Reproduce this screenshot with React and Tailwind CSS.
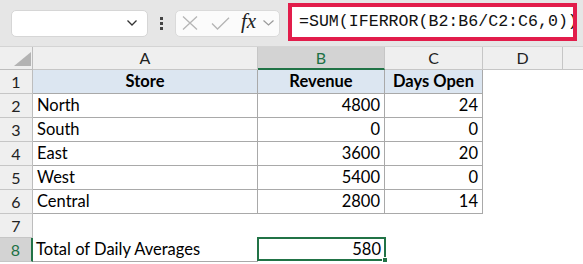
import React from "react";

const font = { fontFamily: "Lato, 'Noto Sans', sans-serif" };

const rows = [
  ["North", "4800", "24"],
  ["South", "0", "0"],
  ["East", "3600", "20"],
  ["West", "5400", "0"],
  ["Central", "2800", "14"],
];

function RowHead({ n, selected }) {
  return (
    <div
      className={
        "h-[24px] flex items-center justify-center border-b border-[#c6c6c6] text-[16px] " +
        (selected
          ? "bg-[#d3d3d3] text-[#1e7145] border-r-2 border-r-[#217346]"
          : "bg-[#efefef] text-[#222] border-r border-r-[#bdbdbd]")
      }
    >
      {n}
    </div>
  );
}

export default function App() {
  return (
    <div className="w-[583px] h-[264px] overflow-hidden bg-white text-black" style={font}>
      {/* formula bar */}
      <div className="h-[47px] bg-[#e6e6e6] flex items-center pl-[11px] border-b border-[#d4d4d4]">
        <div className="w-[137px] h-[27px] bg-white rounded-[5px] border border-[#d6d6d6] flex items-center justify-end pr-[10px]">
          <svg width="10" height="6" viewBox="0 0 10 6">
            <path d="M0.5 0.5 L5 5 L9.5 0.5" fill="none" stroke="#333" strokeWidth="1.3" />
          </svg>
        </div>
        <div className="w-[27px] flex flex-col items-center gap-[2px]">
          <div className="w-[3px] h-[3px] bg-[#444]" />
          <div className="w-[3px] h-[3px] bg-[#444]" />
          <div className="w-[3px] h-[3px] bg-[#444]" />
        </div>
        <div className="w-[105px] h-[27px] bg-[#fbfbfb] rounded-[5px] border border-[#dadada] flex items-center pl-[6px]">
          <svg width="16" height="14" viewBox="0 0 16 14" className="mr-[13px]">
            <path d="M1 0.5 L15 13.5 M15 0.5 L1 13.5" stroke="#b5b5b5" strokeWidth="1.3" fill="none" />
          </svg>
          <svg width="19" height="13" viewBox="0 0 19 13" className="mr-[11px]">
            <path d="M1 6.5 L6.5 12 L18 0.8" stroke="#b5b5b5" strokeWidth="1.3" fill="none" />
          </svg>
          <span
            className="italic text-[21px] leading-none text-[#222] mr-[7px] -mt-[4px]"
            style={{ fontFamily: "'Liberation Serif', serif" }}
          >
            fx
          </span>
          <svg width="11" height="6" viewBox="0 0 11 6">
            <path d="M0.5 0.5 L5.5 5 L10.5 0.5" fill="none" stroke="#9a9a9a" strokeWidth="1.2" />
          </svg>
        </div>
        <div className="ml-[8px] self-start mt-[3px] w-[289px] h-[38px] border-[4px] border-[#e21d4b] bg-white flex items-center pl-[7px] overflow-hidden whitespace-nowrap">
          <span
            className="text-[16.6px] text-[#111]"
            style={{ fontFamily: "'Liberation Mono', monospace" }}
          >
            =SUM(IFERROR(B2:B6/C2:C6,0))
          </span>
        </div>
      </div>

      {/* sheet */}
      <div className="grid grid-cols-[33px_225px_127px_98px_80px_1fr] text-[16.5px]">
        {/* column headers */}
        <div className="h-[23px] bg-[#efefef] border-r border-b border-[#bdbdbd] flex items-end justify-end pr-[1px] pb-[3px]">
          <svg width="17" height="14" viewBox="0 0 17 14">
            <polygon points="17,0 17,14 0,14" fill="#b3b3b3" />
          </svg>
        </div>
        <div className="h-[23px] bg-[#efefef] border-r border-b border-[#c6c6c6] flex items-center justify-center text-[#222] text-[16px]">A</div>
        <div className="h-[23px] bg-[#d3d3d3] border-r border-[#c6c6c6] border-b-2 border-b-[#217346] flex items-center justify-center text-[#1e7145] text-[16px]">B</div>
        <div className="h-[23px] bg-[#efefef] border-r border-b border-[#c6c6c6] flex items-center justify-center text-[#222] text-[16px]">C</div>
        <div className="h-[23px] bg-[#efefef] border-r border-b border-[#c6c6c6] flex items-center justify-center text-[#222] text-[16px]">D</div>
        <div className="h-[23px] bg-[#efefef] border-b border-[#c6c6c6]" />

        {/* row 1 */}
        <RowHead n="1" />
        <div className="h-[24px] bg-[#dce6f1] border-r border-b border-[#a9a9a9] flex items-center justify-center font-bold">Store</div>
        <div className="h-[24px] bg-[#dce6f1] border-r border-b border-[#a9a9a9] flex items-center justify-center font-bold">Revenue</div>
        <div className="h-[24px] bg-[#dce6f1] border-r border-b border-[#a9a9a9] flex items-center justify-center font-bold">Days Open</div>
        <div className="h-[24px]" />
        <div className="h-[24px]" />

        {rows.map((r, i) => (
          <React.Fragment key={i}>
            <RowHead n={String(i + 2)} />
            <div className="h-[24px] border-r border-b border-[#a9a9a9] flex items-center pl-[4px]">{r[0]}</div>
            <div className="h-[24px] border-r border-b border-[#a9a9a9] flex items-center justify-end pr-[4px]">{r[1]}</div>
            <div className="h-[24px] border-r border-b border-[#a9a9a9] flex items-center justify-end pr-[4px]">{r[2]}</div>
            <div className="h-[24px]" />
            <div className="h-[24px]" />
          </React.Fragment>
        ))}

        {/* row 7 */}
        <RowHead n="7" />
        <div className="h-[24px]" />
        <div className="h-[24px]" />
        <div className="h-[24px]" />
        <div className="h-[24px]" />
        <div className="h-[24px]" />

        {/* row 8 */}
        <RowHead n="8" selected />
        <div className="h-[24px] border-b border-[#a9a9a9] flex items-center pl-[3px]">Total of Daily Averages</div>
        <div className="h-[24px] relative -mt-[1px] -ml-[1px] w-[129px] border-2 border-[#217346] flex items-center justify-end pr-[3px]">
          580
          <div className="absolute right-[-4px] bottom-[-4px] w-[6px] h-[6px] bg-[#217346] border border-white" />
        </div>
        <div className="h-[24px]" />
        <div className="h-[24px]" />
        <div className="h-[24px]" />
      </div>
    </div>
  );
}
